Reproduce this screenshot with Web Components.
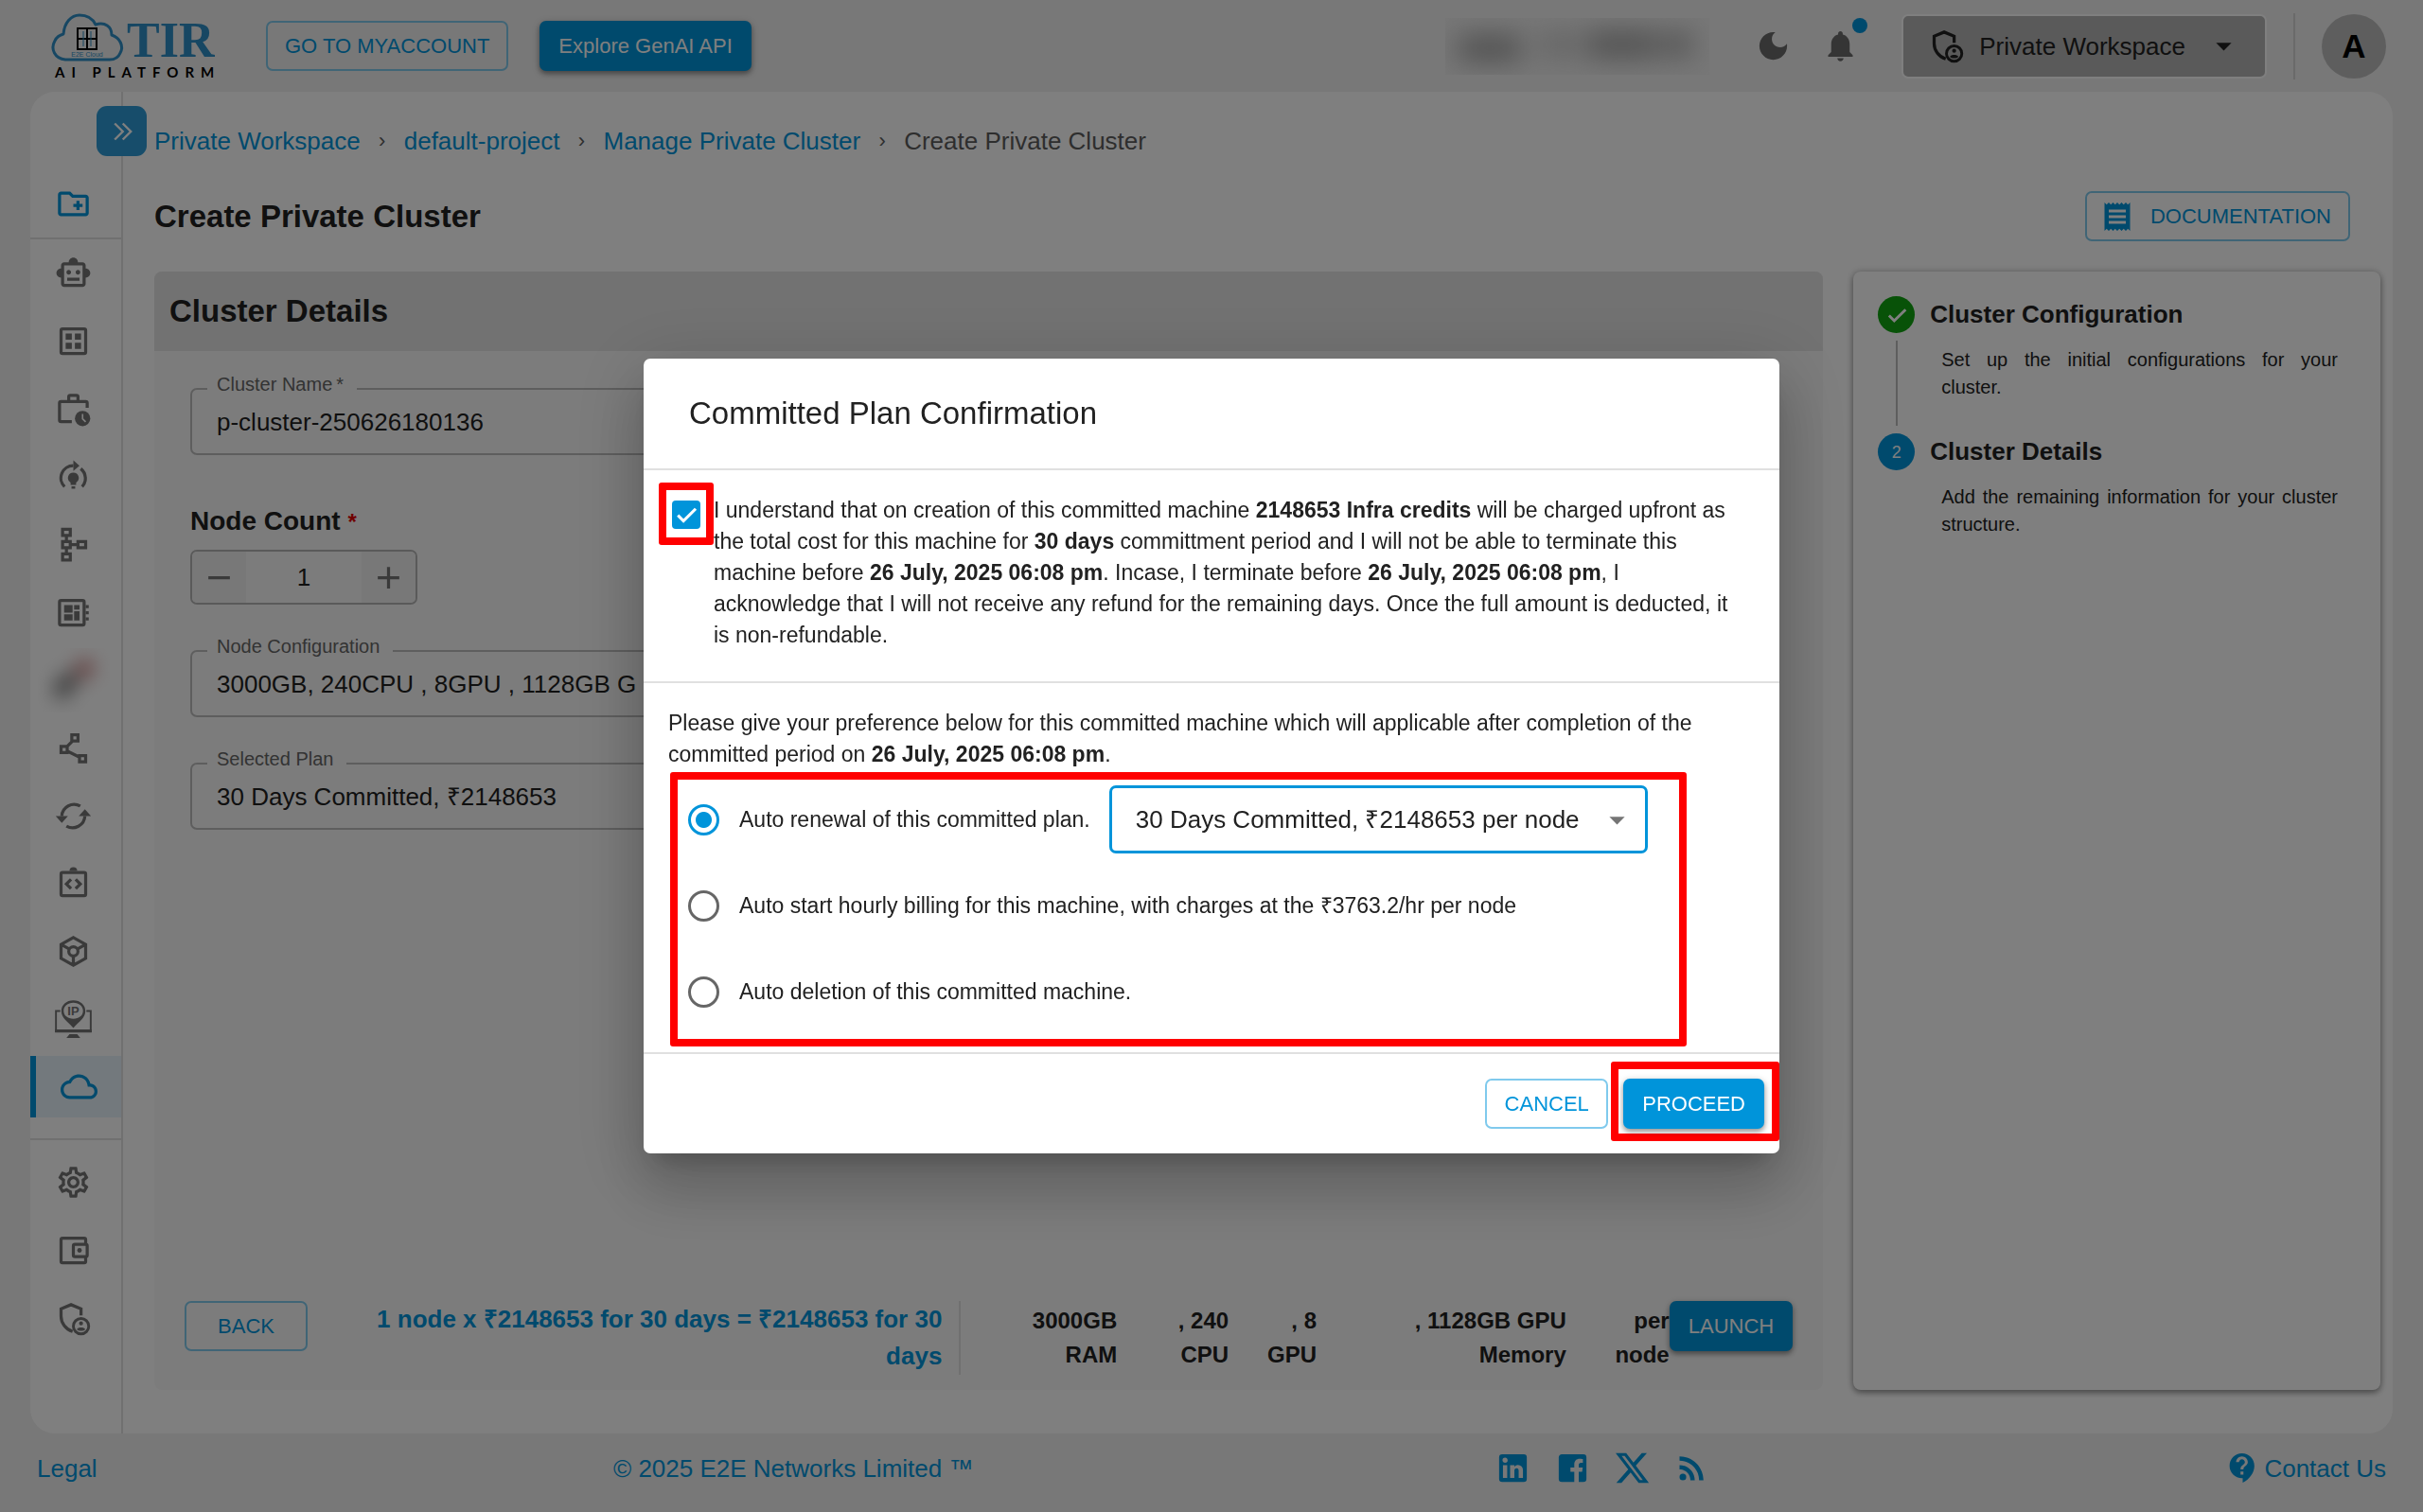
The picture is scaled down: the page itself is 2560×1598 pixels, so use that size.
<!DOCTYPE html>
<html lang="en">
<head>
<meta charset="utf-8">
<meta name="viewport" content="width=device-width, initial-scale=1">
<title>Create Private Cluster</title>
<style>
  :root {
    --primary: #0094da;
    --primary-line: #80caed;
    --ink: #212121;
    --ink-muted: #666;
    --line: #e0e0e0;
    --page: #f0f0f0;
    --mark: #ff0000;
  }
  body {
    margin: 0;
    background: var(--page);
    color: var(--ink);
    font: 26px/40px "Liberation Sans", Arial, sans-serif;
  }
</style>
</head>
<body>
<app-shell>
  <app-header slot="header"></app-header>
  <side-nav slot="nav"></side-nav>
  <crumb-trail></crumb-trail>
  <page-title>Create Private Cluster</page-title>
  <two-column>
    <cluster-panel></cluster-panel>
    <step-card slot="side"></step-card>
  </two-column>
  <app-footer slot="footer"></app-footer>
</app-shell>
<plan-dialog></plan-dialog>

<script>
/* ── helper: attach an open root and fill it once ─────────────────────────── */
class BaseElement extends HTMLElement {
  connectedCallback() {
    if (this._built) return;
    this._built = true;
    this.attachShadow({ mode: 'open' }).innerHTML = this.render();
  }
  render() { return ''; }
}

/* ── <app-icon name="…"> ──────────────────────────────────────────────────── */
const S = 'fill="none" stroke="currentColor" stroke-width="2"';
const ICONS = {
  folder: '<path d="M20 6h-8l-2-2H4c-1.11 0-1.99.89-1.99 2L2 18c0 1.110.89 2 2 2h16c1.110 0 2-.89 2-2V8c0-1.110-.89-2-2-2zm0 12H4V6h5.170l2 2H20v10zm-8-4h2v2h2v-2h2v-2h-2v-2h-2v2h-2z"/>',
  robot: '<path d="M20 9V7c0-1.100-.9-2-2-2h-3c0-1.660-1.340-3-3-3S9 3.340 9 5H6c-1.100 0-2 .9-2 2v2c-1.660 0-3 1.340-3 3s1.340 3 3 3v4c0 1.100.9 2 2 2h12c1.100 0 2-.9 2-2v-4c1.660 0 3-1.340 3-3s-1.340-3-3-3zm-2 10H6V7h12v12zm-9-6c-.83 0-1.500-.67-1.500-1.500S8.170 10 9 10s1.500.67 1.500 1.500S9.830 13 9 13zm7.500-1.500c0 .83-.67 1.500-1.500 1.500s-1.500-.67-1.500-1.500.67-1.500 1.500-1.500 1.500.67 1.500 1.500zM8 15h8v2H8v-2z"/>',
  grid: `<rect x="4" y="4" width="16" height="16" rx="1" ${S}/><path d="M7 7h4v4H7zM13 7h4v4h-4zM7 13h4v4H7zM13 13h4v4h-4z"/>`,
  history: `<path d="M21 11V8a1 1 0 0 0-1-1H4a1 1 0 0 0-1 1v11a1 1 0 0 0 1 1h7M9 7V4a1 1 0 0 1 1-1h4a1 1 0 0 1 1 1v3" ${S}/><circle cx="18" cy="18" r="5"/><path d="M18 15v3.200l2 2" fill="none" stroke="#fff"/>`,
  training: `<path d="M6.300 18.700A8 8 0 0 1 12 5M16.800 7A8 8 0 0 1 17.700 18.700" ${S}/><path d="M12 1.500v7L16 5zM12 9.500a3.500 3.500 0 0 0-1.800 6.500v1.500h3.600V16A3.500 3.500 0 0 0 12 9.500zM10.800 18.500h2.400v1.500h-2.400z"/>`,
  tree: `<path d="M5 2h5v4H5zM5 10h5v4H5zM5 18h5v4H5zM15 10h5v4h-5zM7.500 6v4M7.500 14v4M10 12h5" ${S}/>`,
  board: `<rect x="3" y="4" width="16" height="16" rx="1" ${S}/><path d="M20 7h2v2h-2zM20 11h2v2h-2zM20 15h2v2h-2zM6 7h5.500v5H6zM12.500 7H16v3h-3.500zM6 13h5.500v4H6zM12.500 11H16v6h-3.500z"/>`,
  share: `<path d="M11 3.500h4v4h-4zM4 11h4v4H4zM16 17h4v4h-4zM7.500 11.500l4-4M8 14l8 4" ${S}/>`,
  sync: `<path d="M16.500 5.500A8 8 0 0 0 4.500 12M7.500 18.500A8 8 0 0 0 19.500 12" ${S}/><path d="M.5 12h8l-4 4.500zM23.500 12h-8l4-4.500z"/>`,
  code: `<rect x="4" y="5" width="16" height="15" rx="1" ${S}/><path d="M9.500 4a2.500 2.500 0 0 1 5 0z"/><path d="M10.500 9.500l-3 3 3 3M13.500 9.500l3 3-3 3" ${S}/>`,
  cube: `<path d="M12 3l8 4.500v9L12 21l-8-4.500v-9zM4 7.500l5.500 3M20 7.500l-5.500 3M12 15v6" ${S}/><circle cx="12" cy="12" r="3" ${S}/>`,
  ip: '<path d="M3.500 6.500H.700v13.300h22.600V6.500h-2.800" fill="none" stroke="currentColor" stroke-width="1.200"/><path d="M0 18.500h24v1.800H0zM9.500 21.500h5l2 2.500h-9z"/><path fill-rule="evenodd" d="M12-.5C7.400-.5 4.200 2.500 4.200 6.500c0 4.700 4.100 6.800 7.800 11 3.700-4.200 7.800-6.300 7.800-11 0-4-3.200-7-7.800-7zM12 1c3.700 0 6.300 2.200 6.300 5.300S15.700 11.500 12 11.500 5.700 9.400 5.700 6.300 8.300 1 12 1z"/><text x="12" y="9" text-anchor="middle" font-family="Liberation Sans" font-weight="700" font-size="8">IP</text>',
  cloud: '<path d="M12 6c2.620 0 4.880 1.860 5.390 4.430l.3 1.500 1.530.11c1.560.1 2.780 1.410 2.780 2.960 0 1.650-1.350 3-3 3H6c-2.210 0-4-1.790-4-4 0-2.050 1.530-3.760 3.560-3.970l1.070-.11.5-.95C8.080 7.140 9.940 6 12 6m0-2C9.110 4 6.600 5.640 5.350 8.040 2.340 8.360 0 10.910 0 14c0 3.310 2.690 6 6 6h13c2.760 0 5-2.240 5-5 0-2.640-2.050-4.780-4.650-4.960C18.670 6.590 15.640 4 12 4z"/>',
  gear: '<path d="M19.430 12.980c.04-.32.07-.64.07-.98 0-.34-.03-.66-.07-.98l2.110-1.650c.19-.15.24-.42.12-.64l-2-3.460c-.09-.16-.26-.25-.44-.25-.06 0-.12.01-.17.03l-2.490 1c-.52-.4-1.080-.73-1.690-.98l-.38-2.650C14.460 2.180 14.250 2 14 2h-4c-.25 0-.46.18-.49.42l-.38 2.650c-.61.25-1.170.59-1.690.98l-2.490-1c-.06-.02-.12-.03-.18-.03-.17 0-.34.09-.43.25l-2 3.460c-.13.22-.07.49.12.64l2.110 1.650c-.04.32-.07.65-.07.98 0 .33.03.66.07.98l-2.110 1.650c-.19.15-.24.42-.12.64l2 3.460c.09.16.26.25.44.25.06 0 .12-.01.17-.03l2.490-1c.52.4 1.080.73 1.690.98l.38 2.650c.03.24.24.42.49.42h4c.25 0 .46-.18.49-.42l.38-2.650c.61-.25 1.170-.59 1.690-.98l2.490 1c.06.02.12.03.18.03.17 0 .34-.09.43-.25l2-3.460c.12-.22.07-.49-.12-.64l-2.110-1.650zm-1.980-1.710c.04.31.05.52.05.73 0 .21-.02.43-.05.73l-.14 1.130.89.7 1.080.84-.7 1.210-1.270-.51-1.040-.42-.9.68c-.43.32-.84.56-1.250.73l-1.060.43-.16 1.130-.2 1.350h-1.400l-.19-1.350-.16-1.130-1.060-.43c-.43-.18-.83-.41-1.230-.71l-.91-.7-1.060.43-1.270.51-.7-1.210 1.080-.84.89-.7-.14-1.130c-.03-.31-.05-.54-.05-.74s.02-.43.05-.73l.14-1.130-.89-.7-1.080-.84.7-1.210 1.270.51 1.040.42.9-.68c.43-.32.84-.56 1.250-.73l1.060-.43.16-1.130.2-1.350h1.390l.19 1.350.16 1.130 1.060.43c.43.18.83.41 1.230.71l.91.7 1.060-.43 1.270-.51.7 1.210-1.070.85-.89.7.14 1.130zM12 8c-2.210 0-4 1.790-4 4s1.790 4 4 4 4-1.790 4-4-1.790-4-4-4zm0 6c-1.100 0-2-.9-2-2s.9-2 2-2 2 .9 2 2-.9 2-2 2z"/>',
  wallet: `<path d="M20 8V5a1 1 0 0 0-1-1H5a1 1 0 0 0-1 1v14a1 1 0 0 0 1 1h14a1 1 0 0 0 1-1v-3" ${S}/><rect x="12" y="8" width="9" height="8" rx="1" ${S}/><circle cx="16" cy="12" r="1.500"/>`,
  shield: `<path d="M11.500 20.500C7 19 4 15 4 10.500V5.700L10.500 3 17 5.700V10" ${S}/><circle cx="17" cy="17" r="5" fill="none" stroke="currentColor" stroke-width="1.800"/><circle cx="17" cy="15.200" r="1.300"/><path d="M14.300 19c.6-1.600 4.800-1.600 5.400 0-1 1.300-4.400 1.300-5.400 0z"/>`,
  moon: '<path d="M12 3c-4.970 0-9 4.030-9 9s4.030 9 9 9 9-4.030 9-9c0-.46-.04-.92-.1-1.360-.98 1.370-2.580 2.260-4.400 2.260-2.980 0-5.400-2.420-5.400-5.400 0-1.810.89-3.420 2.260-4.400-.44-.06-.9-.1-1.360-.1z"/>',
  bell: '<path d="M12 22c1.100 0 2-.9 2-2h-4c0 1.100.89 2 2 2zm6-6v-5c0-3.070-1.640-5.640-4.500-6.320V4c0-.83-.67-1.500-1.500-1.500s-1.500.67-1.500 1.500v.68C7.630 5.360 6 7.920 6 11v5l-2 2v1h16v-1l-2-2z"/>',
  receipt: '<path d="M18 17H6v-2h12v2zm0-4H6v-2h12v2zm0-4H6V7h12v2zM3 22l1.500-1.500L6 22l1.500-1.500L9 22l1.500-1.500L12 22l1.500-1.500L15 22l1.500-1.500L18 22l1.500-1.500L21 22V2l-1.500 1.500L18 2l-1.500 1.500L15 2l-1.500 1.500L12 2l-1.500 1.500L9 2 7.500 3.500 6 2 4.500 3.500 3 2v20z"/>',
  chevrons: '<path d="M6.500 6l6 6-6 6M12.500 6l6 6-6 6" fill="none" stroke="currentColor" stroke-width="1.700"/>',
  check: '<path d="M5 12.500l4.700 4.700L20 7" fill="none" stroke="currentColor" stroke-width="2.500"/>',
  caret: '<path d="M7 10l5 5 5-5z"/>',
  minus: '<path d="M5 11h14v2H5z"/>',
  plus: '<path d="M19 13h-6v6h-2v-6H5v-2h6V5h2v6h6v2z"/>',
  linkedin: '<path d="M19 3a2 2 0 0 1 2 2v14a2 2 0 0 1-2 2H5a2 2 0 0 1-2-2V5a2 2 0 0 1 2-2h14m-.5 15.500v-5.300a3.260 3.260 0 0 0-3.260-3.260c-.85 0-1.840.52-2.320 1.300v-1.110h-2.790v8.370h2.790v-4.930c0-.77.62-1.400 1.390-1.400a1.400 1.400 0 0 1 1.400 1.400v4.930h2.790M6.880 8.560a1.680 1.680 0 0 0 1.680-1.680c0-.93-.75-1.690-1.680-1.690a1.690 1.690 0 0 0-1.690 1.690c0 .93.76 1.680 1.690 1.680m1.390 9.940v-8.370H5.500v8.370h2.770z"/>',
  facebook: '<path d="M5 3h14a2 2 0 0 1 2 2v14a2 2 0 0 1-2 2h-3v-6.500h2.200l.4-2.800H16v-1.600c0-.8.4-1.500 1.500-1.500h1.200V6.200s-1-.2-2-.2c-2.200 0-3.600 1.300-3.600 3.700v2h-2.500v2.800h2.500V21H5a2 2 0 0 1-2-2V5c0-1.100.9-2 2-2z"/>',
  x: '<path d="M18.244 2.250h3.308l-7.227 8.260 8.502 11.240H16.170l-5.214-6.817L4.990 21.750H1.680l7.730-8.835L1.254 2.250H8.080l4.713 6.231zm-1.161 17.520h1.833L7.084 4.126H5.117z"/>',
  rss: '<circle cx="6.180" cy="17.820" r="2.180"/><path d="M4 4.440v2.830c7.030 0 12.730 5.700 12.730 12.730h2.830c0-8.590-6.970-15.560-15.560-15.560zm0 5.660v2.830c3.900 0 7.070 3.170 7.070 7.070h2.830c0-5.470-4.430-9.900-9.900-9.900z"/>',
  support: '<path d="M11.500 2C6.810 2 3 5.810 3 10.500S6.810 19 11.500 19h.5v3c4.860-2.340 8-7 8-11.500C20 5.810 16.190 2 11.500 2zm1 14.500h-2v-2h2v2zm0-3.500h-2c0-3.250 3-3 3-5 0-1.100-.9-2-2-2s-2 .9-2 2h-2c0-2.210 1.790-4 4-4s4 1.790 4 4c0 2.500-3 2.750-3 5z"/>',
};

customElements.define('app-icon', class extends BaseElement {
  render() {
    return `
      <style>
        :host { display: block; flex: none; width: var(--icon-size, 39px); height: var(--icon-size, 39px); }
        svg { display: block; width: 100%; height: 100%; overflow: visible; }
      </style>
      <svg viewBox="0 0 24 24" fill="currentColor" aria-hidden="true">${ICONS[this.getAttribute('name')]}</svg>`;
  }
});

/* ── <ui-button kind="outlined|contained"> ────────────────────────────────── */
customElements.define('ui-button', class extends BaseElement {
  render() {
    return `
      <style>
        :host { display: inline-block; flex: none; }
        button {
          display: flex; align-items: center; justify-content: center; gap: 17px;
          min-width: 130px; height: 53px; padding: 0 18px; box-sizing: border-box;
          border: 2px solid var(--primary-line); border-radius: 7px;
          background: transparent; color: var(--primary);
          font: inherit; font-size: 22px; line-height: 32px; white-space: nowrap;
        }
        :host([kind="contained"]) button {
          border-color: var(--primary); background: var(--primary); color: #fff;
          box-shadow: 0 3px 5px rgba(0,0,0,.3), 0 2px 8px rgba(0,0,0,.2);
        }
        ::slotted(app-icon) { margin-left: -4px; }
      </style>
      <button type="button"><slot></slot></button>`;
  }
});

/* ── <highlight-box>: red frame drawn round a control ─────────────────────── */
customElements.define('highlight-box', class extends BaseElement {
  render() {
    return `
      <style>
        :host { display: block; flex: none; box-sizing: border-box; border: 8px solid var(--mark); border-radius: 3px; }
      </style>
      <slot></slot>`;
  }
});

customElements.define('app-shell', class extends BaseElement {
  render() {
    return `
      <style>
        :host { display: grid; grid-template-rows: 97px 1fr 83px; min-height: 100vh; }
        .card { display: flex; margin: 0 32px; border-radius: 26px; background: #fff; }
        main { flex: 1; min-width: 0; display: flex; flex-direction: column; padding: 32px 13px 46px 33px; }
      </style>
      <slot name="header"></slot>
      <div class="card">
        <slot name="nav"></slot>
        <main><slot></slot></main>
      </div>
      <slot name="footer"></slot>`;
  }
});

customElements.define('tir-logo', class extends BaseElement {
  render() {
    return `
      <style>
        :host { display: block; width: 176px; }
        svg { display: block; overflow: visible; }
      </style>
      <svg width="176" height="68" viewBox="0 0 176 68" role="img" aria-label="TIR AI Platform">
        <path d="M15 48C4 47-1 37 4 28c2-4 5-6 9-7C14 9 21 1 30 1c8 0 14 4 17 10 10-3 17 2 17 11 9 3 13 12 9 19-2 5-6 7-11 7z"
          fill="none" stroke="#2f8fc6" stroke-width="3" stroke-linejoin="round"/>
        <path d="M28 15h20v22H28zM28 26h20M38 15v22" fill="none" stroke="#000" stroke-width="2"/>
        <path d="M34 18v16M42 18v16" stroke="#2f8fc6" stroke-width="1"/>
        <text x="38" y="45" text-anchor="middle" font-size="7" fill="#2f8fc6">E2E Cloud</text>
        <text x="80" y="45" font-family="Liberation Serif" font-weight="700" font-size="52" fill="#2f8fc6">TIR</text>
        <text x="4" y="67" font-family="Lato" font-weight="700" font-size="15" letter-spacing="7" fill="#000">AI PLATFORM</text>
      </svg>`;
  }
});

customElements.define('app-header', class extends BaseElement {
  render() {
    return `
      <style>
        :host { display: flex; align-items: center; padding: 0 39px 0 54px; }
        .actions { display: flex; gap: 33px; margin-left: 51px; }
        .tools { display: flex; align-items: center; margin-left: auto; color: #6b6b6b; }
        .account { width: 279px; height: 60px; margin-right: 48px; overflow: hidden; background: #eee; }
        .icon-button { position: relative; padding: 0; border: 0; background: none; color: inherit; }
        .bell { margin: 0 45px 0 32px; }
        .dot { position: absolute; top: -10px; right: -9px; width: 16px; height: 16px; border-radius: 50%; background: var(--primary); }
        .workspace {
          display: flex; align-items: center; height: 68px; padding: 0 24px 0 26px; box-sizing: border-box;
          border: 2px solid #fff; border-radius: 7px; background: #b4b4b4; color: var(--ink);
          font: inherit;
        }
        .workspace span { margin: 0 21px 0 15px; }
        .divider { width: 2px; height: 70px; margin: 0 28px; background: #d4d4d4; }
        .avatar {
          width: 68px; height: 68px; padding: 0; border: 0; border-radius: 50%;
          background: #bdbdbd; color: #000; font: 700 35px/68px "Liberation Sans", Arial, sans-serif;
        }
      </style>
      <tir-logo></tir-logo>
      <div class="actions">
        <ui-button>GO TO MYACCOUNT</ui-button>
        <ui-button kind="contained">Explore GenAI API</ui-button>
      </div>
      <div class="tools">
        <svg class="account" viewBox="0 0 279 60" aria-hidden="true">
          <g fill="#a4a4a4" style="filter: blur(14px)">
            <rect x="14" y="18" width="66" height="28"/><rect x="100" y="16" width="40" height="24" opacity=".5"/>
            <rect x="150" y="14" width="74" height="28"/><rect x="230" y="16" width="30" height="24"/>
          </g>
        </svg>
        <button class="icon-button" type="button" aria-label="Dark mode"><app-icon name="moon"></app-icon></button>
        <button class="icon-button bell" type="button" aria-label="Notifications"><app-icon name="bell"></app-icon><i class="dot"></i></button>
        <button class="workspace" type="button">
          <app-icon name="shield"></app-icon><span>Private Workspace</span><app-icon name="caret"></app-icon>
        </button>
        <div class="divider"></div>
        <button class="avatar" type="button">A</button>
      </div>`;
  }
});

customElements.define('side-nav', class extends BaseElement {
  render() {
    const link = (name) => `<li><a href="#${name}" aria-label="${name}"><app-icon name="${name}"></app-icon></a></li>`;
    const blurred = `<li><svg width="76" height="68" viewBox="0 0 76 72" aria-hidden="true">
      <g style="filter: blur(10px)"><path d="M18 34l18-10 10 12-16 22-16-4z" fill="#909090"/><circle cx="50" cy="23" r="12" fill="#d89c9c"/></g></svg></li>`;
    return `
      <style>
        :host { display: block; position: relative; width: 98px; box-sizing: border-box; border-right: 2px solid var(--line); color: #757575; }
        ul { display: grid; grid-auto-rows: 1fr; margin: 0; padding: 0; list-style: none; }
        li, a { display: flex; align-items: center; justify-content: center; color: inherit; }
        li { min-height: 71px; padding-right: 5px; }
        .new { padding-top: 82px; border-bottom: 2px solid var(--line); }
        .new ul { color: var(--primary); }
        .new li { min-height: 72px; }
        .services { min-height: 860px; }
        .active {
          display: flex; align-items: center; justify-content: center; height: 65px; margin: 3px 0 22px;
          border-left: 6px solid var(--primary); background: #e6f2fa; color: var(--primary);
        }
        .account { padding-top: 8px; border-top: 2px solid var(--line); }
        .account li { min-height: 72px; }
        .toggle {
          position: absolute; top: 15px; left: 70px; display: grid; place-items: center;
          width: 53px; height: 53px; padding: 0; border: 0; border-radius: 11px; background: #2e9bd6; color: #fff;
          --icon-size: 34px;
        }
      </style>
      <button class="toggle" type="button" aria-label="Expand menu"><app-icon name="chevrons"></app-icon></button>
      <nav>
        <div class="new"><ul>${link('folder')}</ul></div>
        <ul class="services">
          ${['robot', 'grid', 'history', 'training', 'tree', 'board'].map(link).join('')}
          ${blurred}
          ${['share', 'sync', 'code', 'cube', 'ip'].map(link).join('')}
        </ul>
        <a class="active" href="#cloud" aria-label="Private Cluster"><app-icon name="cloud"></app-icon></a>
        <ul class="account">${['gear', 'wallet', 'shield'].map(link).join('')}</ul>
      </nav>`;
  }
});

customElements.define('crumb-trail', class extends BaseElement {
  render() {
    return `
      <style>
        :host { display: block; }
        ol { display: flex; margin: 0; padding: 0; list-style: none; color: #5c5c5c; }
        li { display: flex; }
        li + li::before { content: "›"; width: 46px; text-align: center; font-size: 22px; }
        a { color: var(--primary); text-decoration: none; }
      </style>
      <nav aria-label="Breadcrumb"><ol>
        <li><a href="#workspace">Private Workspace</a></li>
        <li><a href="#project">default-project</a></li>
        <li><a href="#clusters">Manage Private Cluster</a></li>
        <li>Create Private Cluster</li>
      </ol></nav>`;
  }
});

customElements.define('page-title', class extends BaseElement {
  render() {
    return `
      <style>
        :host { display: flex; align-items: center; justify-content: space-between; margin: 33px 32px 32px 0; --icon-size: 36px; }
        h1 { margin: 0; font-size: 33px; line-height: 40px; }
      </style>
      <h1><slot></slot></h1>
      <ui-button><app-icon name="receipt"></app-icon>DOCUMENTATION</ui-button>`;
  }
});

customElements.define('two-column', class extends BaseElement {
  render() {
    return `
      <style>
        :host { flex: 1; display: grid; grid-template-columns: 19fr 6fr; gap: 32px; }
      </style>
      <slot></slot><slot name="side"></slot>`;
  }
});

/* ── <text-field label value>: outlined input with a notched label ────────── */
customElements.define('text-field', class extends BaseElement {
  render() {
    return `
      <style>
        :host { display: block; width: 45%; }
        fieldset { margin: 0; padding: 0 26px 15px 16px; border: 2px solid #bdbdbd; border-radius: 7px; min-width: 0; }
        legend { height: 34px; padding: 0 14px 0 10px; box-sizing: border-box; font-size: 20px; line-height: 24px; color: var(--ink-muted); }
        input { display: block; width: 100%; height: 36px; padding: 0 10px; box-sizing: border-box; border: 0; outline: 0; background: none; color: var(--ink); font: inherit; }
      </style>
      <fieldset>
        <legend><label for="field">${this.getAttribute('label')}</label></legend>
        <input id="field" type="text" value="${this.getAttribute('value')}">
      </fieldset>`;
  }
});

customElements.define('node-counter', class extends BaseElement {
  render() {
    return `
      <style>
        :host { display: block; --icon-size: 39px; }
        label { display: block; font-size: 28px; line-height: 34px; font-weight: 700; }
        label span { color: #e00000; font-size: 24px; }
        .stepper { display: inline-flex; margin-top: 12px; border: 2px solid #b4b4b4; border-radius: 7px; overflow: hidden; vertical-align: top; }
        button { display: grid; place-items: center; width: 57px; height: 54px; padding: 0; border: 0; background: #f0f0f0; color: #757575; }
        input { width: 122px; height: 54px; padding: 0; border: 0; outline: 0; background: none; color: var(--ink); font: inherit; text-align: center; }
      </style>
      <label for="count">Node Count <span>*</span></label>
      <div class="stepper">
        <button type="button" aria-label="Remove node"><app-icon name="minus"></app-icon></button>
        <input id="count" type="text" inputmode="numeric" value="1">
        <button type="button" aria-label="Add node"><app-icon name="plus"></app-icon></button>
      </div>`;
  }
});

customElements.define('cluster-panel', class extends BaseElement {
  render() {
    return `
      <style>
        :host { display: flex; flex-direction: column; border-radius: 8px; background: #f9f9f9; }
        h2 { margin: 0; padding: 22px 16px; border-radius: 8px 8px 0 0; background: #e4e4e4; font-size: 33px; line-height: 40px; }
        form { flex: 1; display: flex; flex-direction: column; gap: 32px; padding: 23px 38px; }
        node-counter { margin-top: 21px; }
        .bar { display: grid; grid-template-columns: auto 691fr 749fr auto; align-items: start; padding: 26px 32px 16px; font-weight: 700; }
        ui-button { font-weight: 400; }
        .price { padding: 0 18px 0 40px; border-right: 2px solid #e0e0e0; line-height: 39px; text-align: right; color: var(--primary); }
        .specs { display: grid; grid-template-columns: 165fr 118fr 93fr 264fr 109fr; align-self: center; font-size: 24px; line-height: 36px; text-align: right; }
      </style>
      <h2>Cluster Details</h2>
      <form>
        <text-field label="Cluster Name&thinsp;*" value="p-cluster-250626180136"></text-field>
        <node-counter></node-counter>
        <text-field label="Node Configuration" value="3000GB, 240CPU , 8GPU , 1128GB G"></text-field>
        <text-field label="Selected Plan" value="30 Days Committed, ₹2148653"></text-field>
      </form>
      <div class="bar">
        <ui-button>BACK</ui-button>
        <div class="price">1 node x ₹2148653 for 30 days = ₹2148653 for 30 days</div>
        <div class="specs">
          <span>3000GB<br>RAM</span><span>, 240<br>CPU</span><span>, 8<br>GPU</span>
          <span>, 1128GB GPU<br>Memory</span><span>per<br>node</span>
        </div>
        <ui-button kind="contained">LAUNCH</ui-button>
      </div>`;
  }
});

customElements.define('step-card', class extends BaseElement {
  render() {
    return `
      <style>
        :host { display: block; padding: 26px 45px 26px 26px; border-radius: 8px; background: #fff; box-shadow: 0 3px 6px rgba(0,0,0,.35), 0 0 9px rgba(0,0,0,.2); }
        ol { margin: 0; padding: 0; list-style: none; }
        li { display: grid; grid-template-columns: 39px 1fr; column-gap: 16px; }
        .dot { display: grid; place-items: center; width: 39px; height: 39px; border-radius: 50%; background: var(--primary); color: #fff; font-size: 18px; --icon-size: 28px; }
        .done .dot { background: #10a510; }
        .line { width: 2px; height: 90px; margin: 8px auto; background: #bdbdbd; }
        h3 { margin: 0; font-size: 26px; line-height: 39px; }
        p { margin: 14px 0 0 12px; font-size: 20px; line-height: 29px; text-align: justify; }
        .full { display: block; text-align-last: justify; }
      </style>
      <ol>
        <li class="done"><span class="dot"><app-icon name="check"></app-icon></span><h3>Cluster Configuration</h3>
          <i class="line"></i><p><span class="full">Set up the initial configurations for your</span> cluster.</p></li>
        <li><span class="dot">2</span><h3>Cluster Details</h3>
          <i></i><p>Add the remaining information for your cluster structure.</p></li>
      </ol>`;
  }
});

customElements.define('app-footer', class extends BaseElement {
  render() {
    return `
      <style>
        :host { display: grid; grid-template-columns: 609fr 931fr 942fr; align-items: center; padding: 0 39px 10px; box-sizing: border-box; color: var(--primary); }
        a { color: inherit; text-decoration: none; }
        .end { display: flex; align-items: center; justify-content: space-between; }
        .social { display: flex; gap: 24px; }
        .contact { display: flex; align-items: center; gap: 4px; --icon-size: 37px; }
      </style>
      <a href="#legal">Legal</a>
      <span>© 2025 E2E Networks Limited ™</span>
      <div class="end">
        <div class="social">
          <a href="#linkedin" aria-label="LinkedIn"><app-icon name="linkedin"></app-icon></a>
          <a href="#facebook" aria-label="Facebook"><app-icon name="facebook"></app-icon></a>
          <a href="#x" aria-label="X"><app-icon name="x"></app-icon></a>
          <a href="#rss" aria-label="RSS"><app-icon name="rss"></app-icon></a>
        </div>
        <a class="contact" href="#contact"><app-icon name="support"></app-icon>Contact Us</a>
      </div>`;
  }
});

/* ── <plan-dialog>: backdrop + committed plan confirmation ────────────────── */
customElements.define('plan-dialog', class extends BaseElement {
  render() {
    return `
      <style>
        :host { position: fixed; inset: 0; display: flex; align-items: center; justify-content: center; background: rgba(0,0,0,.5); }
        .paper {
          width: 1200px; max-width: 90vw; border-radius: 7px; background: #fff;
          box-shadow: 0 18px 24px -11px rgba(0,0,0,.2), 0 39px 62px 5px rgba(0,0,0,.14), 0 15px 75px 13px rgba(0,0,0,.12);
          font-size: 23px; line-height: 33px;
        }
        h2 { margin: 0; padding: 38px 48px; font-size: 33px; line-height: 40px; font-weight: 400; }
        p { margin: 0; }
        section { border-top: 2px solid var(--line); }
        .consent { display: flex; align-items: flex-start; padding: 13px 40px 31px 16px; }
        .consent highlight-box { padding: 11px 6px 9px; }
        .consent label { padding-top: 13px; padding-bottom: 1px; }
        input { appearance: none; display: block; flex: none; margin: 0; }
        input[type="checkbox"] { width: 30px; height: 30px; border-radius: 4px; background: var(--primary); }
        .tick { display: grid; }
        .tick > * { grid-area: 1 / 1; place-self: center; }
        .tick app-icon { --icon-size: 30px; color: #fff; pointer-events: none; z-index: 1; }
        .renewal { padding: 26px 26px 6px; }
        .renewal highlight-box { width: 1074px; max-width: 100%; margin: 2px 0 0 2px; padding: 6px 11px 14px; }
        .options { display: grid; gap: 19px; }
        .option { display: flex; align-items: center; height: 72px; }
        .option label { margin: 0 20px 0 21px; }
        input[type="radio"] { width: 33px; height: 33px; box-sizing: border-box; border: 3px solid #666; border-radius: 50%; }
        input[type="radio"]:checked { border-color: var(--primary); background: radial-gradient(circle, var(--primary) 8px, transparent 9px); }
        .select { display: grid; align-items: center; --icon-size: 39px; color: #757575; }
        .select > * { grid-area: 1 / 1; }
        .select app-icon { justify-self: end; margin-right: 13px; pointer-events: none; }
        select {
          appearance: none; height: 72px; padding: 0 69px 0 25px; border: 3px solid var(--primary); border-radius: 7px;
          background: #fff; color: var(--ink); font: inherit; font-size: 26px;
        }
        .actions { display: flex; align-items: center; justify-content: flex-end; gap: 3px; padding: 8px 0 13px; }
        .actions highlight-box { padding: 10px 8px 5px 5px; line-height: 0; }
        .actions > ui-button { margin-top: 5px; }
      </style>
      <div class="paper" role="dialog" aria-modal="true" aria-labelledby="title">
        <h2 id="title">Committed Plan Confirmation</h2>
        <section class="consent">
          <highlight-box>
            <div class="tick"><input id="agree" type="checkbox" checked><app-icon name="check"></app-icon></div>
          </highlight-box>
          <label for="agree">I understand that on creation of this committed machine <b>2148653 Infra credits</b> will be charged upfront as the total cost for this machine for <b>30 days</b> committment period and I will not be able to terminate this machine before <b>26 July, 2025 06:08 pm</b>. Incase, I terminate before <b>26 July, 2025 06:08 pm</b>, I acknowledge that I will not receive any refund for the remaining days. Once the full amount is deducted, it is non-refundable.</label>
        </section>
        <section class="renewal">
          <p>Please give your preference below for this committed machine which will applicable after completion of the committed period on <b>26 July, 2025 06:08 pm</b>.</p>
          <highlight-box>
            <div class="options">
              <div class="option">
                <input id="renew" type="radio" name="after" checked><label for="renew">Auto renewal of this committed plan.</label>
                <div class="select">
                  <select aria-label="Renewal plan"><option>30 Days Committed, ₹2148653 per node</option></select>
                  <app-icon name="caret"></app-icon>
                </div>
              </div>
              <div class="option"><input id="hourly" type="radio" name="after"><label for="hourly">Auto start hourly billing for this machine, with charges at the ₹3763.2/hr per node</label></div>
              <div class="option"><input id="remove" type="radio" name="after"><label for="remove">Auto deletion of this committed machine.</label></div>
            </div>
          </highlight-box>
        </section>
        <section class="actions">
          <ui-button>CANCEL</ui-button>
          <highlight-box><ui-button kind="contained">PROCEED</ui-button></highlight-box>
        </section>
      </div>`;
  }
});
</script>
</body>
</html>
